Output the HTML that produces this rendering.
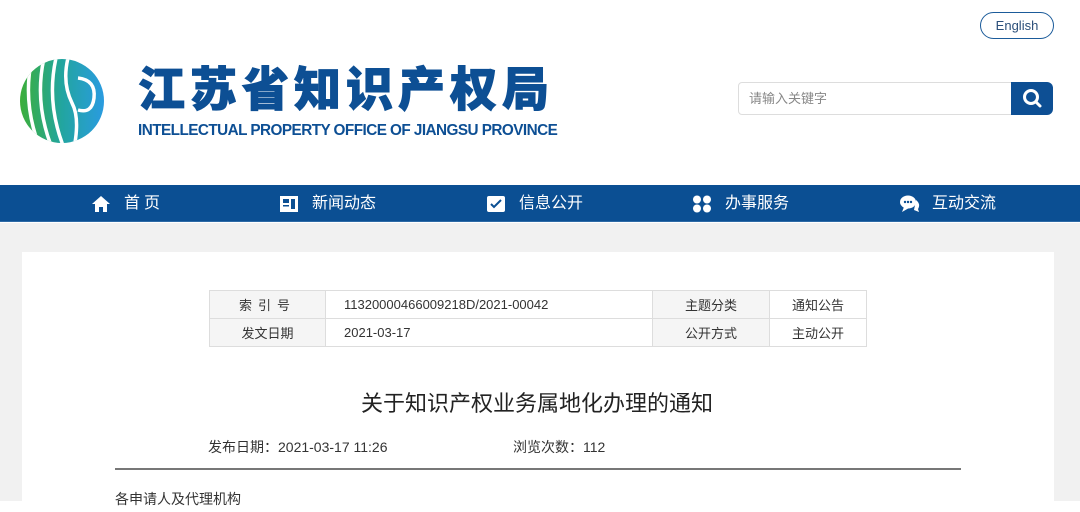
<!DOCTYPE html>
<html><head><meta charset="utf-8"><style>
*{margin:0;padding:0;box-sizing:border-box}
body{width:1080px;height:501px;overflow:hidden;background:#fff;font-family:"Liberation Sans","Noto Sans CJK SC",sans-serif;position:relative}
.abs{position:absolute}
.eng{left:980px;top:12px;width:74px;height:27px;border:1px solid #1b5b9a;border-radius:14px;color:#2b4f7a;font-size:13px;text-align:center;line-height:25px}
.search{left:738px;top:82px;width:274px;height:33px;border:1px solid #ddd;border-radius:4px 0 0 4px;color:#888;font-size:13px;line-height:31px;padding-left:10px}
.sbtn{left:1011px;top:82px;width:42px;height:33px;background:#0d4f94;border-radius:0 6px 6px 0}
.t1{left:138px;top:60px;font-size:47px;font-weight:900;color:#0d4f94;letter-spacing:5px;line-height:60px;white-space:nowrap;-webkit-text-stroke:1px #0d4f94}
.t2{left:138px;top:122px;font-size:15.3px;font-weight:bold;color:#0d4f94;letter-spacing:-0.55px;white-space:nowrap}
.nav{left:0;top:185px;width:1080px;height:37px;background:#0b4f93;border-bottom:1px solid #2d6aa6}
.nav span{position:absolute;top:0;line-height:37px;color:#fff;font-size:16px}
.gray{left:0;top:223px;width:1080px;height:278px;background:#f1f1f1}
.card{left:22px;top:252px;width:1032px;height:260px;background:#fff}
table{position:absolute;left:209px;top:290px;border-collapse:collapse;font-size:13px;color:#333}
td{border:1px solid #ddd;height:28px;text-align:center}
td.h{background:#f5f5f5}
td.v{text-align:left;padding-left:18px}
</style></head><body>
<div class="abs eng">English</div>
<div class="abs search">请输入关键字</div>
<div class="abs sbtn"><svg width="42" height="33"><circle cx="20" cy="15" r="6.5" fill="none" stroke="#fff" stroke-width="3"/><line x1="25" y1="20" x2="29" y2="24" stroke="#fff" stroke-width="3" stroke-linecap="round"/></svg></div>
<svg class="abs" style="left:18px;top:58px" width="90" height="88" viewBox="0 0 90 88">
<defs><clipPath id="c"><circle cx="44" cy="43" r="42"/></clipPath>
<linearGradient id="g" x1="0" x2="1"><stop offset="0" stop-color="#3cae3a"/><stop offset="0.5" stop-color="#22a5a0"/><stop offset="1" stop-color="#2a9be0"/></linearGradient></defs>
<circle cx="44" cy="43" r="42" fill="url(#g)"/>
<g clip-path="url(#c)" fill="none" stroke="#fff" stroke-width="3.5">
<path d="M14 0 Q4 45 22 90"/><path d="M26 0 Q16 45 34 90"/><path d="M38 0 Q28 45 46 90"/>
<path d="M50 0 Q44 25 54 45 Q62 60 56 90"/><path d="M60 20 Q78 22 76 40 Q74 56 60 52"/>
</g></svg>
<div class="abs t1">江苏省知识产权局</div>
<div class="abs t2">INTELLECTUAL PROPERTY OFFICE OF JIANGSU PROVINCE</div>
<div class="abs nav">
<svg class="abs" style="left:91px;top:10px" width="20" height="18"><path d="M10 1 L19 9 L16 9 L16 17 L12 17 L12 12 L8 12 L8 17 L4 17 L4 9 L1 9Z" fill="#fff"/></svg><span style="left:124px;letter-spacing:4px">首页</span>
<svg class="abs" style="left:279px;top:10px" width="20" height="18"><rect x="1" y="1" width="18" height="16" fill="#fff"/><rect x="4" y="4" width="6" height="4" fill="#0b4f93"/><rect x="12" y="4" width="4" height="10" fill="#0b4f93"/><rect x="4" y="10" width="6" height="1.5" fill="#0b4f93"/></svg><span style="left:312px">新闻动态</span>
<svg class="abs" style="left:486px;top:10px" width="20" height="18"><rect x="1" y="1" width="18" height="16" rx="2" fill="#fff"/><path d="M5 9 L8 12 L15 5" stroke="#0b4f93" stroke-width="2" fill="none"/></svg><span style="left:519px">信息公开</span>
<svg class="abs" style="left:692px;top:10px" width="20" height="18"><circle cx="5" cy="4.5" r="4" fill="#fff"/><circle cx="15" cy="4.5" r="4" fill="#fff"/><circle cx="5" cy="13.5" r="4" fill="#fff"/><circle cx="15" cy="13.5" r="4" fill="#fff"/></svg><span style="left:725px">办事服务</span>
<svg class="abs" style="left:899px;top:10px" width="22" height="18"><ellipse cx="9" cy="7" rx="8" ry="6.5" fill="#fff"/><path d="M5 12 L3 17 L10 13Z" fill="#fff"/><path d="M17 5 Q22 9 19 14 L20 17 L15 15" fill="#fff"/><circle cx="6" cy="7" r="1.2" fill="#0b4f93"/><circle cx="9" cy="7" r="1.2" fill="#0b4f93"/><circle cx="12" cy="7" r="1.2" fill="#0b4f93"/></svg><span style="left:932px">互动交流</span>
</div>
<div class="abs gray"></div>
<div class="abs card"></div>
<table>
<tr><td class="h" style="width:116px;letter-spacing:6px">索引号</td><td class="v" style="width:327px">11320000466009218D/2021-00042</td><td class="h" style="width:117px">主题分类</td><td style="width:97px">通知公告</td></tr>
<tr><td class="h">发文日期</td><td class="v">2021-03-17</td><td class="h">公开方式</td><td>主动公开</td></tr>
</table>
<div class="abs" style="left:0;width:1074px;top:386px;text-align:center;font-size:22px;color:#222">关于知识产权业务属地化办理的通知</div>
<div class="abs" style="left:208px;top:437px;font-size:14px;color:#333">发布日期：2021-03-17 11:26</div>
<div class="abs" style="left:513px;top:437px;font-size:14px;color:#333">浏览次数：112</div>
<div class="abs" style="left:115px;top:468px;width:846px;height:2px;background:#777"></div>
<div class="abs" style="left:115px;top:489px;font-size:14px;color:#333">各申请人及代理机构</div>
</body></html>
